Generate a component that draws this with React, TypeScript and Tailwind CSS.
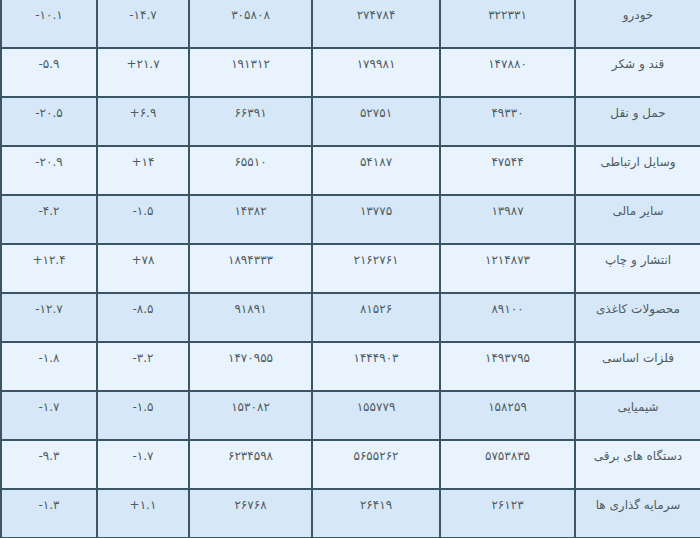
const rows: string[][] = [
  ["خودرو", "۳۲۲۳۳۱", "۲۷۴۷۸۴", "۳۰۵۸۰۸", "-۱۴.۷", "-۱۰.۱"],
  ["قند و شکر", "۱۴۷۸۸۰", "۱۷۹۹۸۱", "۱۹۱۳۱۲", "+۲۱.۷", "-۵.۹"],
  ["حمل و نقل", "۴۹۳۳۰", "۵۲۷۵۱", "۶۶۳۹۱", "+۶.۹", "-۲۰.۵"],
  ["وسایل ارتباطی", "۴۷۵۴۴", "۵۴۱۸۷", "۶۵۵۱۰", "+۱۴", "-۲۰.۹"],
  ["سایر مالی", "۱۳۹۸۷", "۱۳۷۷۵", "۱۴۳۸۲", "-۱.۵", "-۴.۲"],
  ["انتشار و چاپ", "۱۲۱۴۸۷۳", "۲۱۶۲۷۶۱", "۱۸۹۴۳۳۳", "+۷۸", "+۱۲.۴"],
  ["محصولات کاغذی", "۸۹۱۰۰", "۸۱۵۲۶", "۹۱۸۹۱", "-۸.۵", "-۱۲.۷"],
  ["فلزات اساسی", "۱۴۹۳۷۹۵", "۱۴۴۴۹۰۳", "۱۴۷۰۹۵۵", "-۳.۲", "-۱.۸"],
  ["شیمیایی", "۱۵۸۲۵۹", "۱۵۵۷۷۹", "۱۵۳۰۸۲", "-۱.۵", "-۱.۷"],
  ["دستگاه های برقی", "۵۷۵۳۸۳۵", "۵۶۵۵۲۶۲", "۶۲۳۴۵۹۸", "-۱.۷", "-۹.۳"],
  ["سرمایه گذاری ها", "۲۶۱۲۳", "۲۶۴۱۹", "۲۶۷۶۸", "+۱.۱", "-۱.۳"],
]

export default function App() {
  return (
    <div className="w-[700px] h-[538px] overflow-hidden bg-white">
      <div
        className="grid grid-cols-[94px_90px_121px_126px_133px_124px] gap-[2px] pl-[2px] pb-[2px] bg-[#3b5566] text-[12px] leading-[20px] text-[#505a60]"
        style={{ fontFamily: '"DejaVu Sans", sans-serif' }}
      >
        {rows.map((r, i) => {
          const bg = i % 2 === 0 ? "bg-[#d6e8f8]" : "bg-[#e8f3fd]"
          const cells = [r[5], r[4], r[3], r[2], r[1]]
          return [
            ...cells.map((c, j) => (
              <div key={`${i}-${j}`} dir="ltr" className={`${bg} h-[47px] pt-[5px] text-center`}>
                {c}
              </div>
            )),
            <div key={`${i}-n`} dir="rtl" className={`${bg} h-[47px] pt-[5px] text-center`}>
              {r[0]}
            </div>,
          ]
        })}
      </div>
    </div>
  )
}
